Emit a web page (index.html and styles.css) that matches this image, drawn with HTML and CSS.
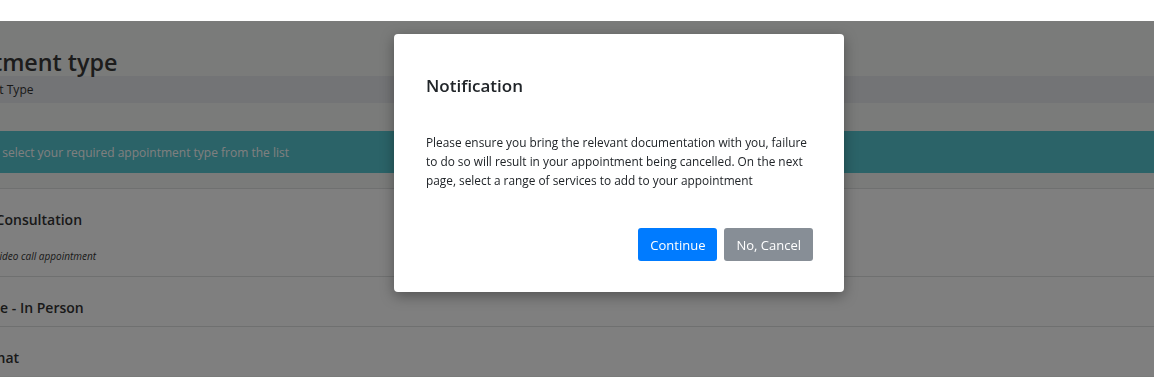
FILE: index.html
```html
<!DOCTYPE html>
<html lang="en">
<head>
  <meta charset="UTF-8">
  <title>Select Appointment Type</title>
  <link rel="stylesheet" href="styles.css">
</head>
<body>

  <div class="top-strip"></div>

  <div class="page">
    <h1 class="page-title">Appointment type</h1>
    <div class="crumbs">Appointment Type</div>

    <div class="alert-info">Please select your required appointment type from the list</div>

    <ul class="type-list">
      <li class="type-item">
        <h3>Video Consultation</h3>
        <p class="type-note">This is a video call appointment</p>
      </li>
      <li class="type-item">
        <h3>Practice - In Person</h3>
      </li>
      <li class="type-item">
        <h3>Web Chat</h3>
      </li>
    </ul>
  </div>

  <div class="backdrop"></div>

  <div class="modal">
    <h2 class="modal-title">Notification</h2>
    <p class="modal-text">Please ensure you bring the relevant documentation with you, failure to do so will result in your appointment being cancelled. On the next page, select a range of services to add to your appointment</p>
    <div class="modal-buttons">
      <button type="button" class="btn-continue">Continue</button>
      <button type="button" class="btn-cancel">No, Cancel</button>
    </div>
  </div>

</body>
</html>
```

FILE: styles.css
```css
body {
  font-family: "Open Sans", "Noto Sans", Arial, sans-serif;
  margin: 0;
  padding: 0;
  background-color: #f4f6f4;
  color: #333;
  overflow: hidden;
  height: 377px;
}

.top-strip {
  height: 21px;
  background-color: #fff;
}

.page {
  margin-left: -87px;
  padding-top: 28px;
}

.page-title {
  font-size: 23.3px;
  font-weight: 600;
  line-height: 27px;
  margin: 0;
  color: #383838;
}

.crumbs {
  background-color: #e7e9ed;
  height: 27px;
  line-height: 28px;
  font-size: 12px;
  padding-left: 17px;
  color: #333;
}

.alert-info {
  margin-top: 28px;
  background-color: #56c6d0;
  color: #fff;
  height: 42px;
  line-height: 43px;
  font-size: 12px;
  padding-left: 50px;
}

.type-list {
  list-style: none;
  margin: 15px 0 0;
  padding: 0;
}

.type-item {
  background-color: #fff;
  border-top: 1px solid #dfe0e0;
  padding: 0 0 9px 41px;
}

.type-item h3 {
  margin: 0;
  padding-top: 21px;
  font-size: 14px;
  font-weight: 600;
  line-height: 19px;
  color: #333;
}

.type-note {
  margin: 20px 0 4px;
  font-size: 10px;
  font-style: italic;
  line-height: 14px;
  padding-left: 3px;
}

.backdrop {
  position: fixed;
  top: 21px;
  left: 0;
  right: 0;
  bottom: 0;
  background-color: rgba(0, 0, 0, 0.5);
}

.modal {
  position: absolute;
  top: 34px;
  left: 394px;
  width: 450px;
  box-sizing: border-box;
  background-color: #fff;
  border-radius: 4px;
  padding: 38px 31px 31px 32px;
  box-shadow: 0 4px 14px rgba(0, 0, 0, 0.35);
}

.modal-title {
  margin: 0;
  font-size: 17px;
  font-weight: 600;
  line-height: 27px;
  color: #212529;
}

.modal-text {
  margin: 34px 0 0;
  font-size: 11.85px;
  line-height: 19px;
  color: #212529;
}

.modal-buttons {
  display: flex;
  justify-content: flex-end;
  gap: 7px;
  margin-top: 38px;
}

.modal-buttons button {
  height: 33px;
  border: none;
  border-radius: 3px;
  color: #fff;
  font-family: inherit;
  font-size: 13px;
  padding: 0 12px;
}

.btn-continue {
  background-color: #007bff;
}

.btn-cancel {
  background-color: #878e96;
}
```
